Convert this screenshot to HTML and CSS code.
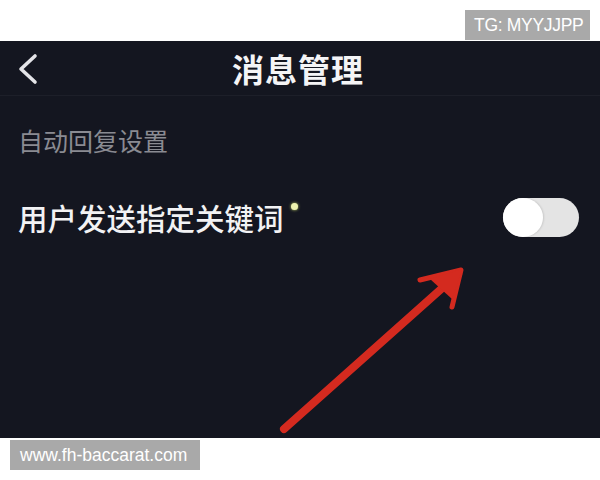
FILE: index.html
```html
<!DOCTYPE html>
<html lang="zh-CN">
<head>
<meta charset="utf-8">
<title>消息管理</title>
<link rel="stylesheet" href="styles.css">
</head>
<body>
<div class="top-band">
  <span class="tag tag-tg">TG: MYYJJPP</span>
</div>
<main class="screen">
  <header class="nav">
    <span class="back">
      <svg width="24" height="32" viewBox="0 0 24 32"><path d="M19 3 L5 16 L19 29" fill="none" stroke="#e4e4e8" stroke-width="3.6" stroke-linecap="round" stroke-linejoin="round"/></svg>
    </span>
    <h1 class="title">消息管理</h1>
    <span class="nav-spacer"></span>
  </header>
  <div class="section-label">自动回复设置</div>
  <div class="row">
    <span class="row-text">用户发送指定关键词<i class="dot"></i></span>
    <span class="toggle"><span class="knob"></span></span>
  </div>
  <svg class="arrow" width="600" height="397" viewBox="0 0 600 397">
    <g stroke="#d42a1f" stroke-linecap="round" stroke-linejoin="round" fill="none">
      <line x1="284" y1="388" x2="458" y2="233" stroke-width="8"/>
      <path d="M420 239 L461 229 L452 266" stroke-width="5"/>
    </g>
    <path d="M430 238 L462 228 L452 258 Z" fill="#d42a1f"/>
  </svg>
</main>
<div class="bottom-band">
  <span class="tag tag-site">www.fh-baccarat.com</span>
</div>
</body>
</html>
```
FILE: styles.css
```css
* { box-sizing: border-box; margin: 0; padding: 0; }
html, body { width: 600px; height: 480px; overflow: hidden; background: #ffffff; }
body { font-family: "Noto Sans CJK SC", "Noto Sans", sans-serif; }

.top-band {
  height: 41px;
  display: flex;
  justify-content: flex-end;
  align-items: flex-start;
  padding: 10px 10px 0 0;
}
.tag {
  background: #a9a9a9;
  color: #ffffff;
  font-family: "Liberation Sans", Arial, sans-serif;
  line-height: 30px;
  height: 30px;
  display: inline-block;
  white-space: nowrap;
}
.tag-tg { width: 125px; padding-left: 9px; font-size: 17.5px; letter-spacing: -0.3px; }
.tag-site { width: 190px; padding-left: 10px; font-size: 17.5px; }

.screen {
  position: relative;
  height: 397px;
  background: #141620;
  color: #ffffff;
}
.nav {
  height: 55px;
  display: grid;
  grid-template-columns: 60px 1fr 60px;
  align-items: center;
  border-bottom: 1px solid #1d1f29;
}
.back { display: flex; padding-left: 16px; padding-top: 2px; }
.title {
  text-align: center;
  font-size: 32px;
  font-weight: 700;
  color: #f4f4f6;
  letter-spacing: 1px;
  line-height: 40px;
  margin-left: -4px;
}
.section-label {
  height: 88px;
  display: flex;
  align-items: center;
  padding-left: 18px;
  font-size: 25px;
  color: #8a8b92;
}
.row {
  height: 70px;
  display: flex;
  align-items: center;
  justify-content: space-between;
  padding: 0 21px 0 18px;
  margin-top: -2px;
}
.row-text {
  font-size: 29.5px;
  font-weight: 500;
  color: #f2f2f4;
  position: relative;
  line-height: 40px;
}
.dot {
  position: absolute;
  right: -14px;
  top: 6px;
  width: 7px;
  height: 7px;
  border-radius: 50%;
  background: #eef3b0;
  box-shadow: 0 0 3px #c9d96a;
}
.toggle {
  width: 76px;
  height: 39px;
  border-radius: 20px;
  background: #e4e4e4;
  display: flex;
  align-items: center;
}
.knob {
  width: 40px;
  height: 39px;
  border-radius: 50%;
  background: #ffffff;
  box-shadow: 1px 0 2px rgba(0,0,0,0.12);
}
.arrow { position: absolute; left: 0; top: 0; pointer-events: none; }

.bottom-band {
  height: 42px;
  padding: 2px 0 0 10px;
}
```
